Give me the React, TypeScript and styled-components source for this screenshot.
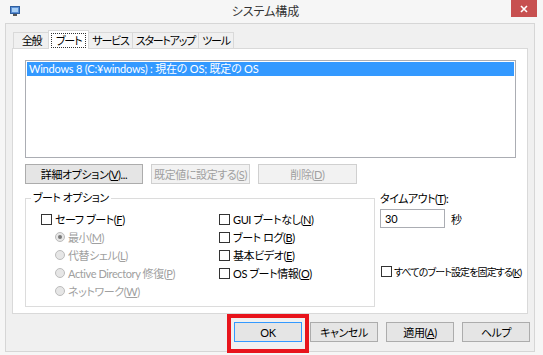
import React from 'react';
import styled, { createGlobalStyle, css } from 'styled-components';

const GlobalStyle = createGlobalStyle`
  html, body {
    margin: 0;
    padding: 0;
    width: 543px;
    height: 355px;
    overflow: hidden;
  }
  body {
    font-family: "Lato", "Noto Sans CJK JP", sans-serif;
    font-size: 11px;
    letter-spacing: -0.2px;
    font-feature-settings: "palt";
    color: #000;
  }
  * {
    box-sizing: border-box;
  }
`;

const Window = styled.div`
  width: 543px;
  height: 355px;
  background: #f6f6f6;
  display: flex;
  flex-direction: column;
  padding: 0 8px 3px 5px;
`;

const TitleBar = styled.div`
  height: 23px;
  display: flex;
  align-items: flex-start;
  padding-left: 5px;
  margin-right: -2px;
`;

const AppIcon = styled.svg`
  width: 10px;
  height: 10px;
  margin-top: 6px;
`;

const Title = styled.div`
  flex: 1;
  text-align: center;
  padding-top: 5px;
  font-size: 12px;
  letter-spacing: 0;
  line-height: 14px;
  color: #333;
`;

const CloseButton = styled.div`
  width: 26px;
  height: 17px;
  background: #c75050;
  display: flex;
  align-items: center;
  justify-content: center;
`;

const Client = styled.div`
  flex: 1;
  background: #f0f0f0;
  border: 1px solid #d6d6d6;
  display: flex;
  flex-direction: column;
  padding: 6px 4px 8px 6px;
`;

const TabStrip = styled.div`
  display: flex;
  align-items: flex-end;
  height: 18px;
  padding-left: 1px;
  position: relative;
  z-index: 1;
`;

const Tab = styled.div<{ $w: number; $active?: boolean }>`
  min-width: ${(p) => p.$w}px;
  height: 16px;
  padding: 0 3px;
  background: #f0f0f0;
  border: 1px solid #d9d9d9;
  border-bottom: none;
  margin-right: -1px;
  display: flex;
  align-items: center;
  justify-content: center;
  line-height: 14px;
  letter-spacing: -1.2px;
  white-space: nowrap;
  flex-shrink: 0;
  ${(p) =>
    p.$active &&
    css`
      height: 19px;
      background: #fff;
      margin: 0 -1px 0 -1px;
      position: relative;
      z-index: 2;
      margin-bottom: -1px;
    `}
`;

const FocusLabel = styled.span`
  outline: 1px dotted #333;
  padding: 0 4px;
  line-height: 13px;
`;

const Panel = styled.div`
  height: 266px;
  margin-right: 2px;
  background: #fff;
  border: 1px solid #d9d9d9;
  padding: 11px 11px 0 12px;
  display: flex;
  flex-direction: column;
`;

const ListBox = styled.div`
  height: 98px;
  border: 1px solid #abadb3;
  padding: 1px;
`;

const SelectedItem = styled.div`
  height: 14px;
  background: #3399ff;
  color: #fff;
  padding-left: 2px;
  line-height: 14px;
  white-space: nowrap;
`;

const ButtonRow = styled.div<{ $end?: boolean }>`
  display: flex;
  gap: 8px;
  ${(p) =>
    p.$end &&
    css`
      justify-content: flex-end;
      margin-top: 8px;
    `}
`;

const Button = styled.div<{ $w: number; $disabled?: boolean; $default?: boolean }>`
  width: ${(p) => p.$w}px;
  height: 20px;
  border: 1px solid #acacac;
  background: #e5e5e5;
  display: flex;
  align-items: center;
  justify-content: center;
  color: #000;
  position: relative;
  white-space: nowrap;
  letter-spacing: -0.4px;
  ${(p) =>
    p.$disabled &&
    css`
      background: #f2f2f2;
      border-color: #d0d0d0;
      color: #a0a0a0;
    `}
  ${(p) =>
    p.$default &&
    css`
      border-color: #3399ff;
    `}
`;

const Highlight = styled.div`
  position: absolute;
  left: -8px;
  right: -8px;
  top: -9px;
  bottom: -12px;
  border: 4px solid #e8141c;
  pointer-events: none;
`;

const TopButtons = styled(ButtonRow)`
  margin-top: 6px;
`;

const Lower = styled.div`
  display: flex;
  margin-top: 8px;
  gap: 5px;
`;

const GroupBox = styled.div`
  width: 350px;
  flex-shrink: 0;
  height: 109px;
  border: 1px solid #dcdcdc;
  margin-top: 6px;
  position: relative;
  padding: 11px 0 0 15px;
  display: flex;
`;

const GroupLegend = styled.span`
  position: absolute;
  top: -8px;
  left: 5px;
  background: #fff;
  padding: 0 2px;
  line-height: 14px;
  letter-spacing: -0.5px;
`;

const Column = styled.div<{ $w?: number }>`
  display: flex;
  flex-direction: column;
  ${(p) => p.$w && `width: ${p.$w}px;`}
`;

const OptionRow = styled.div<{ $indent?: boolean; $disabled?: boolean }>`
  height: 18px;
  display: flex;
  align-items: center;
  gap: 3px;
  white-space: nowrap;
  letter-spacing: -0.4px;
  ${(p) => p.$indent && 'padding-left: 14px;'}
  ${(p) => p.$disabled && 'color: #a0a0a0;'}
`;

const CheckBox = styled.span`
  width: 11px;
  height: 11px;
  border: 1px solid #333;
  background: #fff;
  flex-shrink: 0;
`;

const Radio = styled.span<{ $checked?: boolean }>`
  width: 10px;
  height: 10px;
  border-radius: 50%;
  border: 1px solid #bcbcbc;
  background: #e6e6e6;
  flex-shrink: 0;
  display: flex;
  align-items: center;
  justify-content: center;
  &::after {
    content: '';
    width: 4px;
    height: 4px;
    border-radius: 50%;
    background: ${(p) => (p.$checked ? '#7a7a7a' : 'transparent')};
  }
`;

const TimeoutColumn = styled.div`
  display: flex;
  flex-direction: column;
  min-width: 0;
`;

const TimeoutLabel = styled.div`
  line-height: 14px;
  letter-spacing: -0.5px;
`;

const TimeoutRow = styled.div`
  display: flex;
  align-items: center;
  gap: 6px;
  margin-top: 3px;
`;

const TextInput = styled.div`
  width: 65px;
  height: 19px;
  border: 1px solid #abadb3;
  padding-left: 4px;
  line-height: 17px;
`;

const LockRow = styled(OptionRow)`
  margin-top: 34px;
  padding-left: 1px;
  gap: 2px;
  font-size: 10px;
  letter-spacing: -0.9px;
`;

const Key = styled.u``;

const App = () => {
  return (
    <>
      <GlobalStyle />
      <Window>
        <TitleBar>
          <AppIcon viewBox="0 0 10 10">
            <rect x="0.5" y="0.5" width="9" height="7" fill="#5b8fd6" stroke="#2f5f9e" />
            <rect x="2" y="2" width="6" height="4" fill="#a9d0f5" />
            <rect x="3" y="8" width="4" height="2" fill="#555" />
          </AppIcon>
          <Title>システム構成</Title>
          <CloseButton>
            <svg width="8" height="8" viewBox="0 0 8 8">
              <path d="M1 1 L7 7 M7 1 L1 7" stroke="#fff" strokeWidth="1.6" />
            </svg>
          </CloseButton>
        </TitleBar>
        <Client>
          <TabStrip>
            <Tab $w={37}>全般</Tab>
            <Tab $w={41} $active>
              <FocusLabel>ブート</FocusLabel>
            </Tab>
            <Tab $w={37}>サービス</Tab>
            <Tab $w={57}>スタートアップ</Tab>
            <Tab $w={35}>ツール</Tab>
          </TabStrip>
          <Panel>
            <ListBox>
              <SelectedItem>Windows 8 (C:¥windows) : 現在の OS; 既定の OS</SelectedItem>
            </ListBox>
            <TopButtons>
              <Button $w={118}>
                <span>
                  詳細オプション(<Key>V</Key>)...
                </span>
              </Button>
              <Button $w={99} $disabled>
                <span>
                  既定値に設定する(<Key>S</Key>)
                </span>
              </Button>
              <Button $w={99} $disabled>
                <span>
                  削除(<Key>D</Key>)
                </span>
              </Button>
            </TopButtons>
            <Lower>
              <GroupBox>
                <GroupLegend>ブート オプション</GroupLegend>
                <Column $w={178}>
                  <OptionRow>
                    <CheckBox />
                    <span>
                      セーフ ブート(<Key>F</Key>)
                    </span>
                  </OptionRow>
                  <OptionRow $indent $disabled>
                    <Radio $checked />
                    <span>
                      最小(<Key>M</Key>)
                    </span>
                  </OptionRow>
                  <OptionRow $indent $disabled>
                    <Radio />
                    <span>
                      代替シェル(<Key>L</Key>)
                    </span>
                  </OptionRow>
                  <OptionRow $indent $disabled>
                    <Radio />
                    <span>
                      Active Directory 修復(<Key>P</Key>)
                    </span>
                  </OptionRow>
                  <OptionRow $indent $disabled>
                    <Radio />
                    <span>
                      ネットワーク(<Key>W</Key>)
                    </span>
                  </OptionRow>
                </Column>
                <Column>
                  <OptionRow>
                    <CheckBox />
                    <span>
                      GUI ブートなし(<Key>N</Key>)
                    </span>
                  </OptionRow>
                  <OptionRow>
                    <CheckBox />
                    <span>
                      ブート ログ(<Key>B</Key>)
                    </span>
                  </OptionRow>
                  <OptionRow>
                    <CheckBox />
                    <span>
                      基本ビデオ(<Key>E</Key>)
                    </span>
                  </OptionRow>
                  <OptionRow>
                    <CheckBox />
                    <span>
                      OS ブート情報(<Key>O</Key>)
                    </span>
                  </OptionRow>
                </Column>
              </GroupBox>
              <TimeoutColumn>
                <TimeoutLabel>
                  タイムアウト(<Key>T</Key>):
                </TimeoutLabel>
                <TimeoutRow>
                  <TextInput>30</TextInput>
                  <span>秒</span>
                </TimeoutRow>
                <LockRow>
                  <CheckBox />
                  <span>
                    すべてのブート設定を固定する(<Key>K</Key>)
                  </span>
                </LockRow>
              </TimeoutColumn>
            </Lower>
          </Panel>
          <ButtonRow $end>
            <Button $w={68} $default>
              OK
              <Highlight />
            </Button>
            <Button $w={68}>キャンセル</Button>
            <Button $w={68}>
              <span>
                適用(<Key>A</Key>)
              </span>
            </Button>
            <Button $w={68}>ヘルプ</Button>
          </ButtonRow>
        </Client>
      </Window>
    </>
  );
};

export default App;
